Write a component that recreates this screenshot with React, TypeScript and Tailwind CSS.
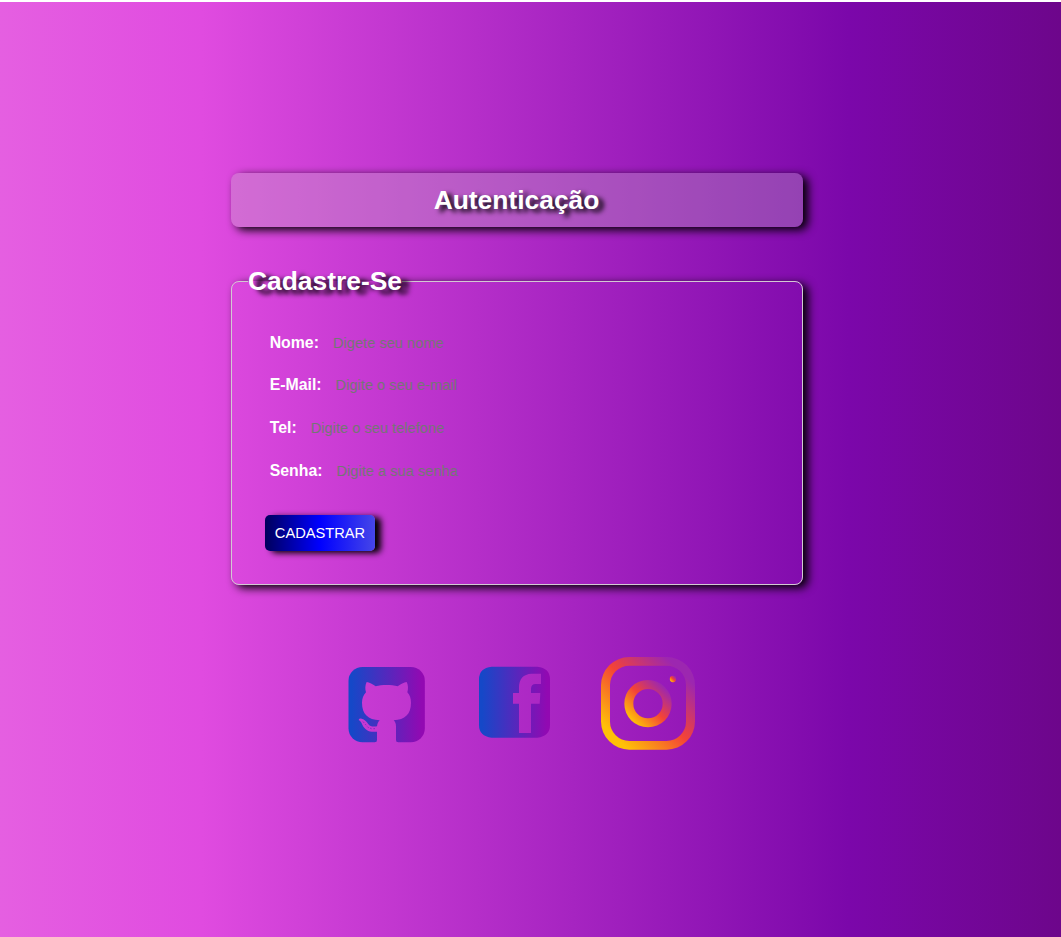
import React from "react";

const fields = [
  { id: "nome", label: "Nome:", placeholder: "Digete seu nome", type: "text" },
  { id: "email", label: "E-Mail:", placeholder: "Digite o seu e-mail", type: "email" },
  { id: "tel", label: "Tel:", placeholder: "Digite o seu telefone", type: "tel" },
  { id: "senha", label: "Senha:", placeholder: "Digite a sua senha", type: "password" },
];

function BlueGradient({ id }: { id: string }) {
  return (
    <linearGradient id={id} x1="0" x2="1" y1="0" y2="0">
      <stop offset="0.04" stopColor="#1548c8" />
      <stop offset="0.96" stopColor="#9209b2" />
    </linearGradient>
  );
}

function GithubIcon() {
  return (
    <svg width="100" height="95" viewBox="0 0 300 285" aria-label="GitHub">
      <defs>
        <BlueGradient id="gh" />
        <mask id="cat" maskUnits="userSpaceOnUse" x="0" y="0" width="300" height="285">
          <rect width="300" height="285" fill="white" />
          <path
            fill="black"
            d="M80 81C88 82 98 87 107 94C126 89 154 89 173 94C182 87 192 82 200 81C205 91 205 102 202 112C210 121 213 131 213 143C213 178 195 193 161 196C166 201 168 207 168 214V255Q168 262 174 262V270H105V262Q111 262 111 255V230C88 233 75 225 67 209C64 202 61 198 56 195Q57 190 65 191C74 193 79 199 84 206C91 215 98 216 111 214C112 207 114 201 119 196C84 193 66 178 66 143C66 131 70 121 78 112C75 102 75 91 80 81Z"
          />
        </mask>
      </defs>
      <rect x="25.5" y="36" width="229" height="226" rx="42" fill="url(#gh)" mask="url(#cat)" />
      <path d="M69 200L77 209L84 217L94 221L110 221" fill="none" stroke="#7a22bd" strokeWidth="3" strokeDasharray="4 6" />
    </svg>
  );
}

function FacebookIcon() {
  return (
    <svg width="100" height="95" viewBox="0 0 300 285" aria-label="Facebook">
      <defs>
        <BlueGradient id="fb" />
      </defs>
      <path
        fill="url(#fb)"
        fillRule="evenodd"
        d="M65 35H202Q240 39 240 73V210Q240 244 202 248H65Q27 244 27 210V73Q27 39 65 35ZM147 234H183V146H209L211 114H183V102Q183 87 197 87H213V56H185Q147 58 147 98V114H129V146H147Z"
      />
    </svg>
  );
}

function InstagramIcon() {
  return (
    <svg width="110" height="105" viewBox="0 0 330 315" aria-label="Instagram">
      <defs>
        <linearGradient id="ig" x1="0.146" y1="0.854" x2="0.854" y2="0.146">
          <stop offset="0" stopColor="#ffc107" />
          <stop offset="0.507" stopColor="#f44336" />
          <stop offset="0.99" stopColor="#9c27b0" />
        </linearGradient>
      </defs>
      <path
        fill="url(#ig)"
        fillRule="evenodd"
        d="M103 21H215A85 85 0 0 1 300 106V214A85 85 0 0 1 215 299H103A85 85 0 0 1 18 214V106A85 85 0 0 1 103 21ZM103 47A58 58 0 0 0 45 105V215A58 58 0 0 0 103 273H215A58 58 0 0 0 273 215V105A58 58 0 0 0 215 47Z"
      />
      <path
        fill="url(#ig)"
        fillRule="evenodd"
        d="M159 90A71 71 0 1 1 159 232A71 71 0 1 1 159 90ZM159 117A44 44 0 1 0 159 205A44 44 0 1 0 159 117Z"
      />
      <circle cx="234" cy="87" r="9.5" fill="url(#ig)" />
    </svg>
  );
}

export default function App() {
  return (
    <div className="h-[937px] overflow-hidden bg-white pt-[2px] font-['Liberation_Sans',Arial,sans-serif]">
      <main className="h-full bg-[linear-gradient(to_right,#e55fe1_0%,#e04be0_19%,#7b07aa_80%,#6d068b_100%)] pt-[171px] pl-[231px]">
        <h1 className="h-[54px] w-[572px] rounded-[8px] bg-[#c0c0c0]/30 pr-px text-center text-[26.4px] leading-[54px] font-bold text-white shadow-[5px_3px_10px_black] [text-shadow:5px_3px_5px_black]">
          Autenticação
        </h1>

        <form className="mt-[39px]">
          <fieldset className="h-[319px] w-[572px] rounded-[8px] border border-[#d3c8d3] px-4 shadow-[5px_3px_10px_black]">
            <legend className="h-[31px] text-[26.4px] leading-[31px] font-bold text-white [text-shadow:8px_4px_5px_black]">
              Cadastre-Se
            </legend>
            <div className="flex flex-col pt-[24.45px] pl-[21.7px]">
              {fields.map((f) => (
                <div key={f.id} className="flex h-[42.7px] items-baseline pt-[9.33px]">
                  <label htmlFor={f.id} className="text-[15.84px] font-bold text-white">
                    {f.label}
                  </label>
                  <input
                    id={f.id}
                    type={f.type}
                    placeholder={f.placeholder}
                    className="ml-[14px] w-[200px] bg-transparent text-[14.67px] outline-none placeholder:text-[#757575]"
                  />
                </div>
              ))}
            </div>
            <button
              type="button"
              className="mt-[22.4px] ml-[17px] h-[36px] w-[110px] rounded-[5px] bg-[linear-gradient(to_right,#00005c,#0000ff_50%,#4646e8)] text-[14.67px] text-white shadow-[6px_2px_6px_black]"
            >
              CADASTRAR
            </button>
          </fieldset>
        </form>

        <nav className="mt-[65px] flex items-start pl-[109px]">
          <a className="mt-[5px]"><GithubIcon /></a>
          <a className="mt-[5px] ml-[30px]"><FacebookIcon /></a>
          <a className="ml-[25px]"><InstagramIcon /></a>
        </nav>
      </main>
    </div>
  );
}
